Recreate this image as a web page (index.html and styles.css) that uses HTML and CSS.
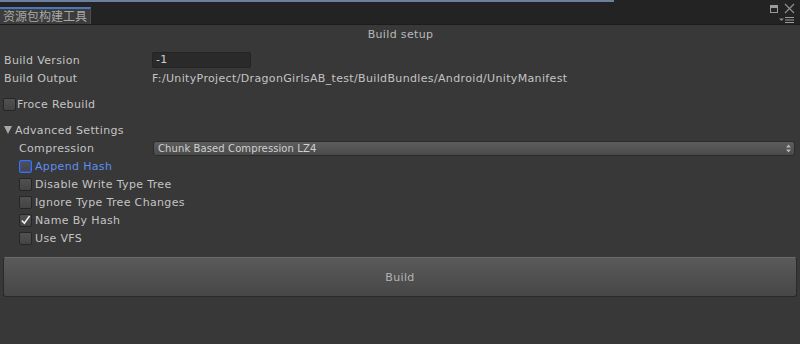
FILE: index.html
```html
<!DOCTYPE html>
<html>
<head>
<meta charset="utf-8">
<link rel="stylesheet" href="styles.css">
</head>
<body>
<div class="window">
  <div class="titlebar">
    <div class="tab">资源包构建工具</div>
    <div class="winctl">
      <div class="winbtns">
        <svg class="max" width="8" height="8" viewBox="0 0 8 8"><rect x="0.5" y="0.5" width="7" height="7" fill="none" stroke="#9a9a9a"/><rect x="1" y="1" width="6" height="2" fill="#9a9a9a"/></svg>
        <svg class="close" width="11" height="11" viewBox="0 0 11 11"><path d="M1 1L10 10M10 1L1 10" stroke="#8f8f8f" stroke-width="1.2"/></svg>
      </div>
      <svg class="menu" width="16" height="6" viewBox="0 0 16 6"><path d="M0 1.5h5l-2.5 2.5z" fill="#8a8a8a"/><rect x="6" y="0" width="9" height="1" fill="#9a9a9a"/><rect x="6" y="2.5" width="9" height="1" fill="#9a9a9a"/><rect x="6" y="5" width="9" height="1" fill="#9a9a9a"/></svg>
    </div>
  </div>
  <div class="content">
    <div class="heading">Build setup</div>
    <div class="row first">
      <span class="label">Build Version</span>
      <span class="input">-1</span>
    </div>
    <div class="row">
      <span class="label">Build Output</span>
      <span class="value">F:/UnityProject/DragonGirlsAB_test/BuildBundles/Android/UnityManifest</span>
    </div>
    <div class="check rebuild"><span class="box"></span><span>Froce Rebuild</span></div>
    <div class="foldout"><span class="tri"></span><span>Advanced Settings</span></div>
    <div class="indent">
      <div class="row comp">
        <span class="label sub">Compression</span>
        <div class="dropdown"><span>Chunk Based Compression LZ4</span>
          <svg width="5" height="9" viewBox="0 0 5 9"><path d="M0 3.5L2.5 0.5L5 3.5z M0 5.5L2.5 8.5L5 5.5z" fill="#b8b8b8"/></svg>
        </div>
      </div>
      <div class="check focus"><span class="box"></span><span>Append Hash</span></div>
      <div class="check"><span class="box"></span><span>Disable Write Type Tree</span></div>
      <div class="check"><span class="box"></span><span>Ignore Type Tree Changes</span></div>
      <div class="check"><span class="box on"><svg width="12" height="12" viewBox="0 0 12 12"><path d="M2 6.5L4.8 9.5L10.5 1.5" fill="none" stroke="#f0f0f0" stroke-width="1.8"/></svg></span><span>Name By Hash</span></div>
      <div class="check"><span class="box"></span><span>Use VFS</span></div>
    </div>
    <div class="buildbtn">Build</div>
  </div>
</div>
</body>
</html>
```
FILE: styles.css
```css
* { box-sizing: border-box; }
html, body { margin: 0; padding: 0; }
body {
  width: 800px;
  height: 344px;
  background: #383838;
  font-family: "DejaVu Sans", "Noto Sans CJK SC", sans-serif;
  font-size: 11px;
  letter-spacing: 0.35px;
  color: #c4c4c4;
  overflow: hidden;
}
.window { display: flex; flex-direction: column; height: 344px; }
.titlebar {
  height: 25px;
  background: #232323;
  border-top: 2px solid #6d7f9f;
  border-bottom: 1px solid #1c1c1c;
  display: flex;
  justify-content: space-between;
  align-items: flex-end;
  position: relative;
}
.titlebar::after {
  content: "";
  position: absolute;
  top: -2px;
  left: 614px;
  right: 0;
  height: 2px;
  background: #232323;
}
.tab {
  width: 91px;
  height: 17px;
  background: #3c3c3c;
  border-top: 2px solid #4a76c0;
  border-right: 1px solid #4e4e4e;
  color: #a8a8a8;
  font-family: "Noto Sans CJK SC", sans-serif;
  font-size: 12px;
  letter-spacing: 0;
  line-height: 14px;
  padding-left: 3px;
  white-space: nowrap;
  overflow: hidden;
}
.winctl {
  display: flex;
  flex-direction: column;
  align-items: flex-end;
  padding-right: 5px;
  height: 100%;
}
.winbtns { display: flex; align-items: center; gap: 6px; margin-top: 1px; }
.winbtns .max { margin-top: 1px; }
.menu { margin-top: 3px; }
.content {
  flex: 1;
  display: flex;
  flex-direction: column;
  padding: 0 3px 0 4px;
}
.heading {
  text-align: center;
  height: 18px;
  line-height: 18px;
  margin-top: 1px;
  color: #b9b9b9;
}
.row { display: flex; align-items: center; height: 18px; }
.row.first { margin-top: 7px; }
.label { width: 148px; flex: none; }
.label.sub { width: 134px; }
.input {
  width: 99px;
  height: 16px;
  background: #2a2a2a;
  border: 1px solid #242424;
  border-radius: 2px;
  padding-left: 3px;
  line-height: 14px;
  color: #cfcfcf;
}
.value { color: #c4c4c4; white-space: nowrap; }
.check { display: flex; align-items: center; height: 18px; gap: 3px; }
.box {
  width: 13px;
  height: 13px;
  border-radius: 2px;
  background: linear-gradient(#515151, #444);
  border: 1px solid #262626;
  display: flex;
  align-items: center;
  justify-content: center;
  flex: none;
}
.box svg { display: block; }
.rebuild { margin-top: 8px; margin-left: -1px; gap: 1px; }
.focus .box { border-color: #3f6fe0; box-shadow: inset 0 0 0 1px #2d55b8; }
.focus { color: #5d8ff2; }
.foldout { display: flex; align-items: center; height: 18px; margin-top: 8px; gap: 3px; }
.tri {
  width: 0; height: 0;
  border-left: 4.5px solid transparent;
  border-right: 4.5px solid transparent;
  border-top: 8px solid #a8a8a8;
}
.indent { padding-left: 15px; display: flex; flex-direction: column; }
.comp .label { color: #c4c4c4; }
.dropdown {
  flex: 1;
  height: 15px;
  margin-right: 2px;
  background: linear-gradient(#5d5d5d, #4a4a4a);
  border: 1px solid #2b2b2b;
  border-radius: 3px;
  display: flex;
  align-items: center;
  justify-content: space-between;
  padding: 0 3px 0 4px;
  font-size: 10px;
  letter-spacing: 0.1px;
  color: #d0d0d0;
}
.dropdown svg { display: block; }
.buildbtn {
  margin-top: 10px;
  margin-left: -1px;
  height: 40px;
  background: linear-gradient(#5a5a5a, #474747);
  border: 1px solid #2a2a2a;
  border-top-color: #6a6a6a;
  border-radius: 3px;
  display: flex;
  align-items: center;
  justify-content: center;
  color: #b4b4b4;
}
```
